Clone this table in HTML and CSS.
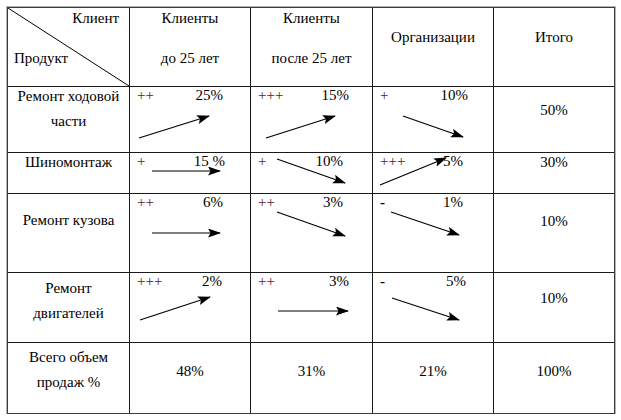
FILE: index.html
```html
<!DOCTYPE html>
<html lang="ru">
<head>
<meta charset="utf-8">
<link rel="stylesheet" href="styles.css">
</head>
<body>
<div class="wrap">
  <div class="sheet">
    <!-- header row -->
    <div class="cell head corner">
      <span class="ln right">Клиент</span>
      <span class="ln gap-head">Продукт</span>
      <svg class="diag" width="121" height="78" viewBox="0 0 121 78"><line x1="0" y1="0" x2="121" y2="78" stroke="#000" stroke-width="1"/></svg>
    </div>
    <div class="cell head center">
      <span class="ln">Клиенты</span>
      <span class="ln gap-head">до 25 лет</span>
    </div>
    <div class="cell head center">
      <span class="ln">Клиенты</span>
      <span class="ln gap-head">после 25 лет</span>
    </div>
    <div class="cell head center mid">
      <span class="ln">Организации</span>
    </div>
    <div class="cell head center mid">
      <span class="ln">Итого</span>
    </div>

    <!-- row 1 -->
    <div class="cell label center">
      <span class="ln">Ремонт ходовой</span>
      <span class="ln gap">части</span>
    </div>
    <div class="cell data p27"><span class="sign">++</span><span class="pct">25%</span></div>
    <div class="cell data p23"><span class="sign">+++</span><span class="pct">15%</span></div>
    <div class="cell data p25"><span class="sign">+</span><span class="pct">10%</span></div>
    <div class="cell total center t14"><span class="ln">50%</span></div>

    <!-- row 2 -->
    <div class="cell label center"><span class="ln">Шиномонтаж</span></div>
    <div class="cell data p25"><span class="sign">+</span><span class="pct">15 %</span></div>
    <div class="cell data p29"><span class="sign">+</span><span class="pct">10%</span></div>
    <div class="cell data p30"><span class="sign">+++</span><span class="pct">5%</span></div>
    <div class="cell total center"><span class="ln">30%</span></div>

    <!-- row 3 -->
    <div class="cell label center t17"><span class="ln">Ремонт кузова</span></div>
    <div class="cell data p27"><span class="sign">++</span><span class="pct">6%</span></div>
    <div class="cell data p29"><span class="sign">++</span><span class="pct">3%</span></div>
    <div class="cell data p30"><span class="sign minus">-</span><span class="pct">1%</span></div>
    <div class="cell total center t18"><span class="ln">10%</span></div>

    <!-- row 4 -->
    <div class="cell label center t6">
      <span class="ln">Ремонт</span>
      <span class="ln gap">двигателей</span>
    </div>
    <div class="cell data p28"><span class="sign">+++</span><span class="pct">2%</span></div>
    <div class="cell data p23"><span class="sign">++</span><span class="pct">3%</span></div>
    <div class="cell data p27"><span class="sign minus">-</span><span class="pct">5%</span></div>
    <div class="cell total center t16"><span class="ln">10%</span></div>

    <!-- row 5 -->
    <div class="cell label center t5">
      <span class="ln">Всего объем</span>
      <span class="ln gap">продаж %</span>
    </div>
    <div class="cell total center t19"><span class="ln">48%</span></div>
    <div class="cell total center t19"><span class="ln">31%</span></div>
    <div class="cell total center t19"><span class="ln">21%</span></div>
    <div class="cell total center t19"><span class="ln">100%</span></div>

    <!-- drawn arrows over the table -->
    <svg class="arrows" width="608" height="407" viewBox="0 0 608 407">
      <defs>
        <marker id="ah" markerUnits="userSpaceOnUse" markerWidth="13" markerHeight="10" refX="12" refY="4.5" orient="auto">
          <path d="M0,0 L13,4.5 L0,9 L2.5,4.5 Z" fill="#000"/>
        </marker>
      </defs>
      <g stroke="#000" stroke-width="1.2" fill="none" marker-end="url(#ah)" transform="translate(-7,-7)">
        <line x1="138" y1="137" x2="208" y2="115"/>
        <line x1="265" y1="137" x2="334" y2="115"/>
        <line x1="402" y1="115" x2="462" y2="136"/>
        <line x1="151" y1="170" x2="219" y2="170"/>
        <line x1="276" y1="158" x2="344" y2="182"/>
        <line x1="379" y1="184" x2="445" y2="157"/>
        <line x1="151" y1="232" x2="219" y2="232"/>
        <line x1="276" y1="211" x2="344" y2="235"/>
        <line x1="390" y1="211" x2="458" y2="234"/>
        <line x1="139" y1="319" x2="209" y2="296"/>
        <line x1="277" y1="310" x2="347" y2="310"/>
        <line x1="391" y1="297" x2="458" y2="319"/>
      </g>
    </svg>
  </div>
</div>
</body>
</html>
```

FILE: styles.css
```css
html, body {
  margin: 0;
  padding: 0;
  background: #fff;
}

.wrap {
  padding: 7px 0 0 7px;
}

.sheet {
  position: relative;
  display: grid;
  grid-template-columns: 121px 120px 121px 120px 120px;
  grid-template-rows: 78px 65px 40px 78px 69px 70px;
  gap: 1px;
  width: 606px;
  background: #1a1a1a;
  border: 1px solid #3a3a3a;
  box-shadow: 0 0 0 1px #b5b5b5;
  font-family: "Liberation Serif", "Times New Roman", serif;
  font-size: 15px;
  color: #000;
}

.cell {
  position: relative;
  background: #fff;
  overflow: hidden;
}

.ln {
  display: block;
  line-height: 18px;
  white-space: nowrap;
}

.center { text-align: center; }
.right { text-align: right; padding-right: 10px; }

.head { padding-top: 1px; }
.corner { padding-left: 6px; }
.gap-head { margin-top: 22px; }
.gap { margin-top: 7px; }
.mid { padding-top: 20px; }

.diag {
  position: absolute;
  left: 0;
  top: 0;
}

.data {
  display: flex;
  justify-content: space-between;
  align-items: flex-start;
  padding-left: 7px;
  line-height: 16px;
}

.sign {
  color: #5a2038;
}

.sign.minus {
  color: #000;
  font-weight: bold;
}

.p23 { padding-right: 23px; }
.p25 { padding-right: 25px; }
.p27 { padding-right: 27px; }
.p28 { padding-right: 28px; }
.p29 { padding-right: 29px; }
.p30 { padding-right: 30px; }

.t5 { padding-top: 5px; }
.t6 { padding-top: 6px; }
.t14 { padding-top: 14px; }
.t16 { padding-top: 16px; }
.t17 { padding-top: 17px; }
.t18 { padding-top: 18px; }
.t19 { padding-top: 19px; }

.arrows {
  position: absolute;
  left: 0;
  top: 0;
  pointer-events: none;
}
```
